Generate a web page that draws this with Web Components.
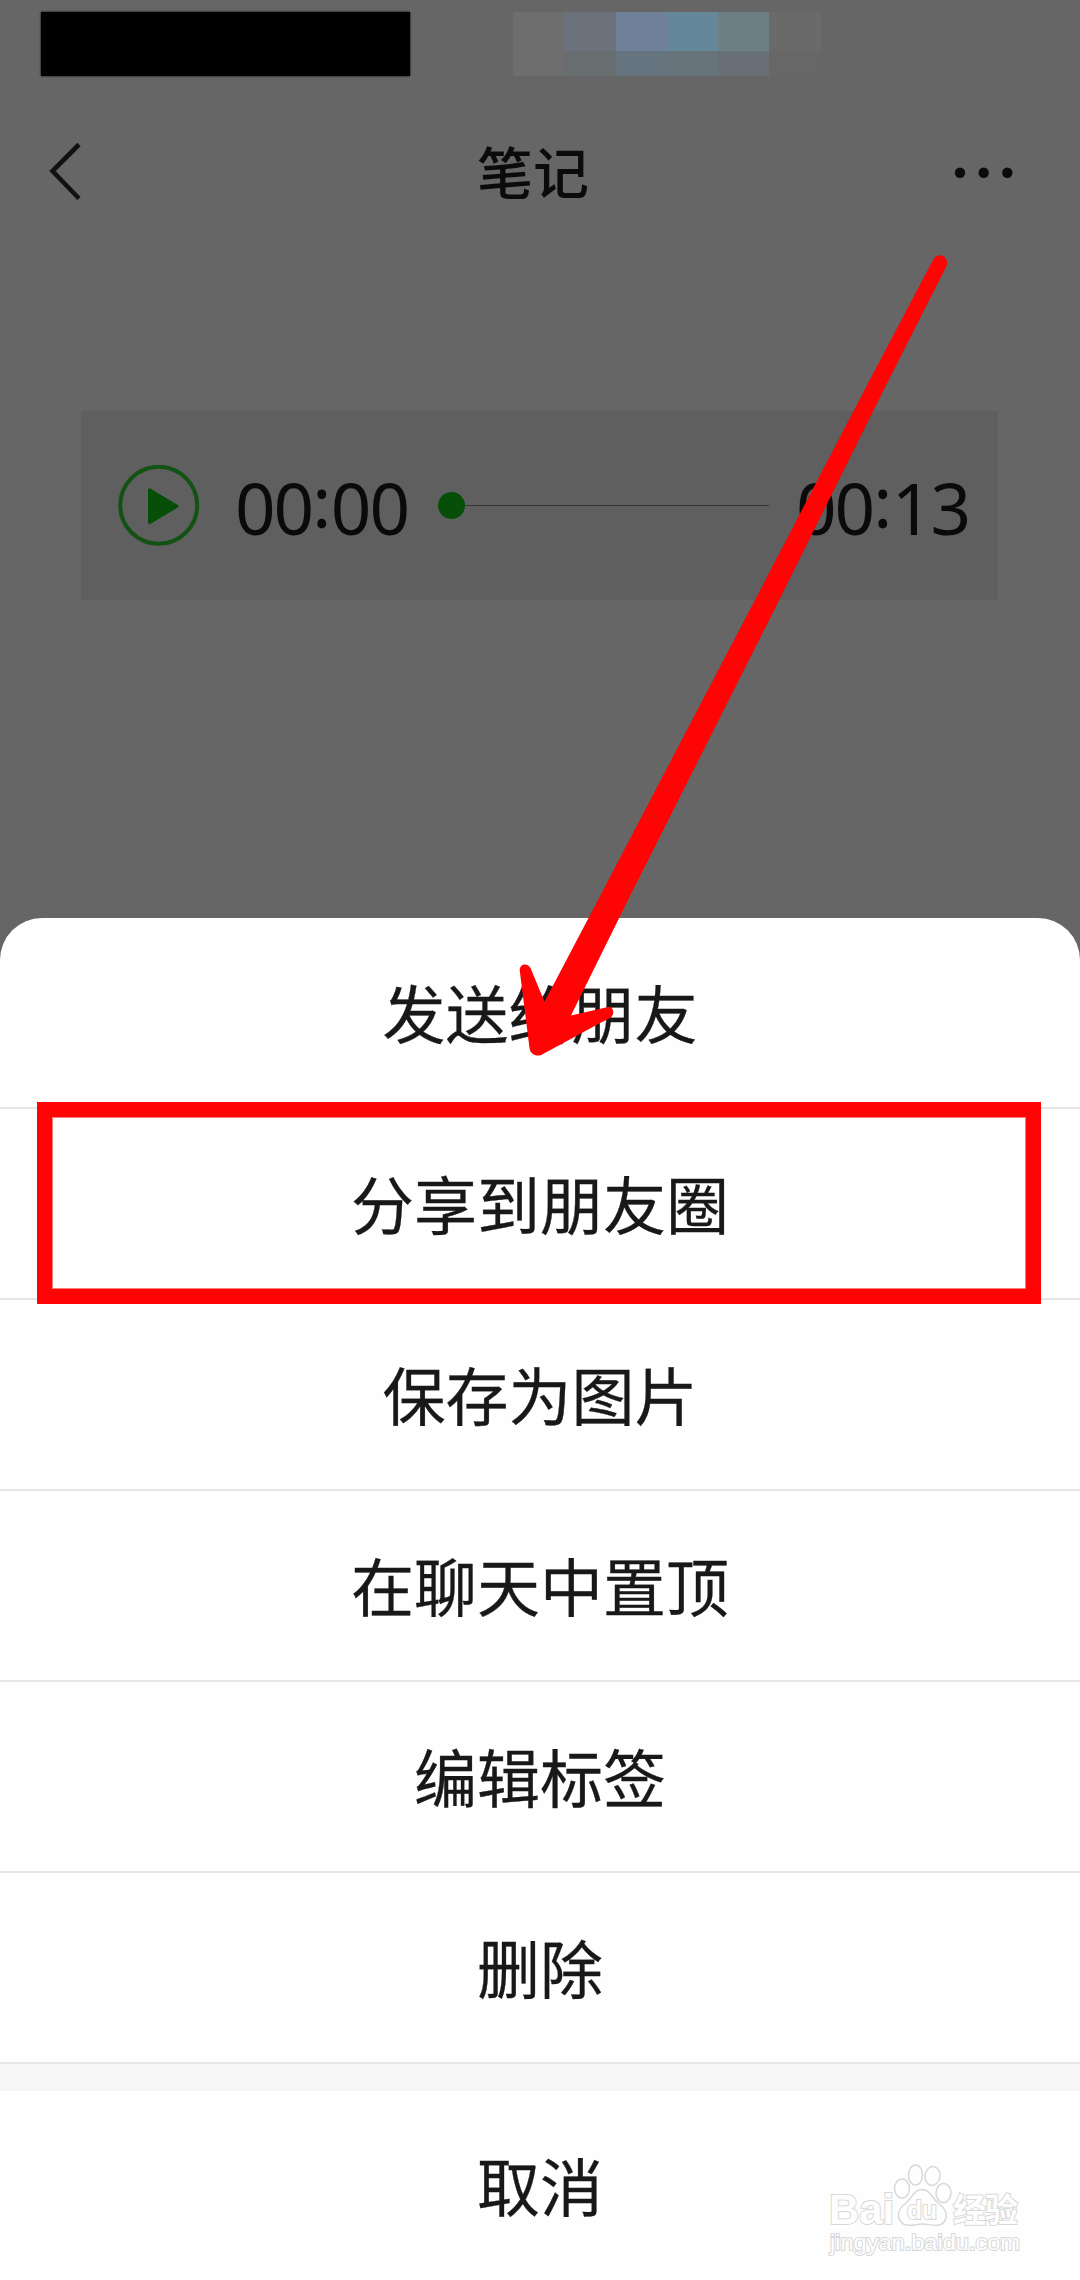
<!DOCTYPE html>
<html lang="zh-CN">
<head>
<meta charset="UTF-8">
<title>笔记</title>
<style>
  body {
    margin: 0;
    width: 1080px;
    height: 2280px;
    overflow: hidden;
    background-color: #666;
    font-family: "Noto Sans CJK SC", sans-serif;
    color: #181818;
  }
</style>
</head>
<body>
<note-screen>
  <status-bar></status-bar>
  <note-header titulo="笔记"></note-header>
  <audio-card inicio="00:00" fim="00:13"></audio-card>
  <action-sheet slot="sheet">
    <sheet-item>发送给朋友</sheet-item>
    <sheet-item>分享到朋友圈</sheet-item>
    <sheet-item>保存为图片</sheet-item>
    <sheet-item>在聊天中置顶</sheet-item>
    <sheet-item>编辑标签</sheet-item>
    <sheet-item>删除</sheet-item>
    <sheet-item slot="cancel" plain>取消</sheet-item>
  </action-sheet>
  <guide-marks slot="overlay"></guide-marks>
  <water-mark slot="overlay"></water-mark>
</note-screen>

<script>
class NoteScreen extends HTMLElement {
  constructor() {
    super();
    let shadowRoot = this.attachShadow({mode: 'open'});
    shadowRoot.innerHTML = `
    <style>
      :host {
        position: relative;
        display: flex;
        flex-direction: column;
        height: 2280px;
      }
      main {
        height: 918px;
      }
    </style>
    <main><slot></slot></main>
    <slot name="sheet"></slot>
    <slot name="overlay"></slot>
    `;
  }
}
customElements.define('note-screen', NoteScreen);

class StatusBar extends HTMLElement {
  constructor() {
    super();
    let shadowRoot = this.attachShadow({mode: 'open'});
    const colors = [
      '#6e6e6e', '#6b727b', '#6e8198', '#648799', '#6b7f84', '#6a6a6a',
      '#6e6e6e', '#686e70', '#66747f', '#67747b', '#686f77', '#676767'
    ];
    shadowRoot.innerHTML = `
    <style>
      :host {
        display: flex;
        box-sizing: border-box;
        height: 90px;
        padding: 12px 0 0 41px;
        gap: 103px;
      }
      .bar {
        width: 369px;
        height: 64px;
        background-color: #000;
        box-shadow: 0 0 2px #000;
      }
      .mosaic {
        display: grid;
        grid-template-columns: repeat(6, 51.3px);
        grid-template-rows: 39px 25px;
      }
    </style>
    <div class="bar"></div>
    <div class="mosaic">
      ${colors.map(c => `<i style="background:${c}"></i>`).join('')}
    </div>
    `;
  }
}
customElements.define('status-bar', StatusBar);

class NoteHeader extends HTMLElement {
  constructor() {
    super();
    let shadowRoot = this.attachShadow({mode: 'open'});
    shadowRoot.innerHTML = `
    <style>
      :host {
        display: grid;
        grid-template-columns: 70px 1fr 70px;
        align-items: center;
        box-sizing: border-box;
        height: 164px;
        padding: 0 60px 0 46px;
        color: #0b0b0b;
      }
      h1 {
        margin: 0 0 5px;
        font-size: 56px;
        line-height: 80px;
        font-weight: 500;
        text-align: center;
      }
      svg {
        display: block;
      }
    </style>
    <svg width="40" height="64" viewBox="0 0 40 64"><path d="M33 4.500L6.500 31L33 58.500" fill="none" stroke="#111" stroke-width="4.600"/></svg>
    <h1>${this.getAttribute('titulo')}</h1>
    <svg width="70" height="20" viewBox="0 0 70 20" fill="#0b0b0b"><circle cx="10" cy="10.700" r="5.200"/><circle cx="33.700" cy="10.700" r="5.200"/><circle cx="57.300" cy="10.700" r="5.200"/></svg>
    `;
  }
}
customElements.define('note-header', NoteHeader);

class AudioCard extends HTMLElement {
  constructor() {
    super();
    let shadowRoot = this.attachShadow({mode: 'open'});
    // the colon sits higher than the digits' baseline
    const time = t => t.replace(':', '<span>:</span>');
    shadowRoot.innerHTML = `
    <style>
      :host {
        display: flex;
        align-items: center;
        box-sizing: border-box;
        width: 917px;
        height: 189px;
        margin: 157px 0 0 81px;
        padding-left: 37px;
        background-color: #5f5f5f;
        color: #0a0a0a;
      }
      svg {
        display: block;
        flex: none;
      }
      time {
        font: 71px/80px "Noto Sans", sans-serif;
        letter-spacing: -2px;
        width: 170px;
        margin-top: 5px;
        white-space: nowrap;
      }
      time span {
        position: relative;
        top: -7px;
        letter-spacing: -0.5px;
      }
      .start {
        margin-left: 35px;
      }
      .track {
        margin: 0 27px 0 33px;
      }
    </style>
    <svg width="82" height="81" viewBox="0 0 82 81">
      <circle cx="40.700" cy="40.300" r="38.500" fill="none" stroke="#125213" stroke-width="4"/>
      <path d="M31.500 24.800L59 41.300L31.500 57.800Z" fill="#074f09" stroke="#074f09" stroke-width="3" stroke-linejoin="round"/>
    </svg>
    <time class="start">${time(this.getAttribute('inicio'))}</time>
    <svg class="track" width="331" height="27" viewBox="0 0 331 27">
      <path d="M14 13.500H331" stroke="#353535"/>
      <circle cx="13.500" cy="13.500" r="13.500" fill="#074f09"/>
    </svg>
    <time>${time(this.getAttribute('fim'))}</time>
    `;
  }
}
customElements.define('audio-card', AudioCard);

class ActionSheet extends HTMLElement {
  constructor() {
    super();
    let shadowRoot = this.attachShadow({mode: 'open'});
    shadowRoot.innerHTML = `
    <style>
      :host {
        display: block;
        height: 1362px;
        background-color: #fefefe;
        border-radius: 42px 42px 0 0;
      }
      .gap {
        height: 27px;
        background-color: #f6f6f6;
      }
    </style>
    <slot></slot>
    <div class="gap"></div>
    <slot name="cancel"></slot>
    `;
  }
}
customElements.define('action-sheet', ActionSheet);

class SheetItem extends HTMLElement {
  constructor() {
    super();
    let shadowRoot = this.attachShadow({mode: 'open'});
    shadowRoot.innerHTML = `
    <style>
      :host {
        display: flex;
        justify-content: center;
        align-items: center;
        box-sizing: border-box;
        height: 191px;
        padding-bottom: 3px;
        border-bottom: 2px solid #e5e5e5;
        font-size: 63px;
        line-height: 90px;
        -webkit-text-stroke: 0.3px #181818;
      }
      :host([plain]) {
        padding-bottom: 5px;
        border-bottom: none;
      }
    </style>
    <slot></slot>
    `;
  }
}
customElements.define('sheet-item', SheetItem);

// red frame and arrow drawn over the page
class GuideMarks extends HTMLElement {
  constructor() {
    super();
    let shadowRoot = this.attachShadow({mode: 'open'});
    shadowRoot.innerHTML = `
    <style>
      :host {
        position: absolute;
        top: 0;
        left: 0;
      }
      svg {
        display: block;
      }
    </style>
    <svg width="1080" height="2280" viewBox="0 0 1080 2280">
      <rect x="44.500" y="1109.500" width="989" height="187" fill="none" stroke="#ff0404" stroke-width="15"/>
      <rect x="52.500" y="1117.500" width="973" height="171" fill="none" stroke="#ff7b7b"/>
      <path fill="#ff0404" d="M933 260C936 254 943 254 946 259Q948 263 946 267L883.700 390L769.200 620L628 900L571 1015.500L608 1007C613 1006 616 1014 610 1018Q607 1020 602 1022L543 1054C537 1058 530 1054 529.500 1048L519.800 971C519 964 527 962 530.500 968L544.500 1001.700L598 900L744.500 620L864.500 390Z"/>
    </svg>
    `;
  }
}
customElements.define('guide-marks', GuideMarks);

class WaterMark extends HTMLElement {
  constructor() {
    super();
    let shadowRoot = this.attachShadow({mode: 'open'});
    shadowRoot.innerHTML = `
    <style>
      :host {
        position: absolute;
        left: 820px;
        top: 2155px;
      }
      svg {
        display: block;
      }
      text {
        paint-order: stroke;
      }
    </style>
    <svg width="210" height="110" viewBox="0 0 210 110" fill="#fefefe" stroke="#d8d8d8" stroke-width="2">
      <text x="9" y="69" font-family="Liberation Sans" font-weight="700" font-size="43" textLength="65" lengthAdjust="spacingAndGlyphs">Bai</text>
      <g stroke-width="1.500">
        <ellipse cx="82" cy="33.500" rx="7.500" ry="9.500"/>
        <ellipse cx="95.500" cy="20" rx="7" ry="10"/>
        <ellipse cx="112.500" cy="21" rx="7.500" ry="9.500" transform="rotate(10 112.500 21)"/>
        <ellipse cx="123.500" cy="38" rx="7.500" ry="9.500"/>
        <path d="M102 34.500C94 34.500 92 43 86 48C79 53 76 60 81 67C86 73 95 69 102 69C109 69 119 73 124 67C129 60 125 53 118 48C112 43 110 34.500 102 34.500Z"/>
      </g>
      <text x="87" y="64" font-family="Liberation Sans" font-weight="700" font-size="26" textLength="30" lengthAdjust="spacingAndGlyphs">du</text>
      <text x="133" y="67" font-family="Noto Sans CJK SC" font-weight="700" font-size="33" textLength="65">经验</text>
      <text x="10" y="95" font-family="Liberation Sans" font-size="22" textLength="190" lengthAdjust="spacingAndGlyphs">jingyan.baidu.com</text>
    </svg>
    `;
  }
}
customElements.define('water-mark', WaterMark);
</script>
</body>
</html>
